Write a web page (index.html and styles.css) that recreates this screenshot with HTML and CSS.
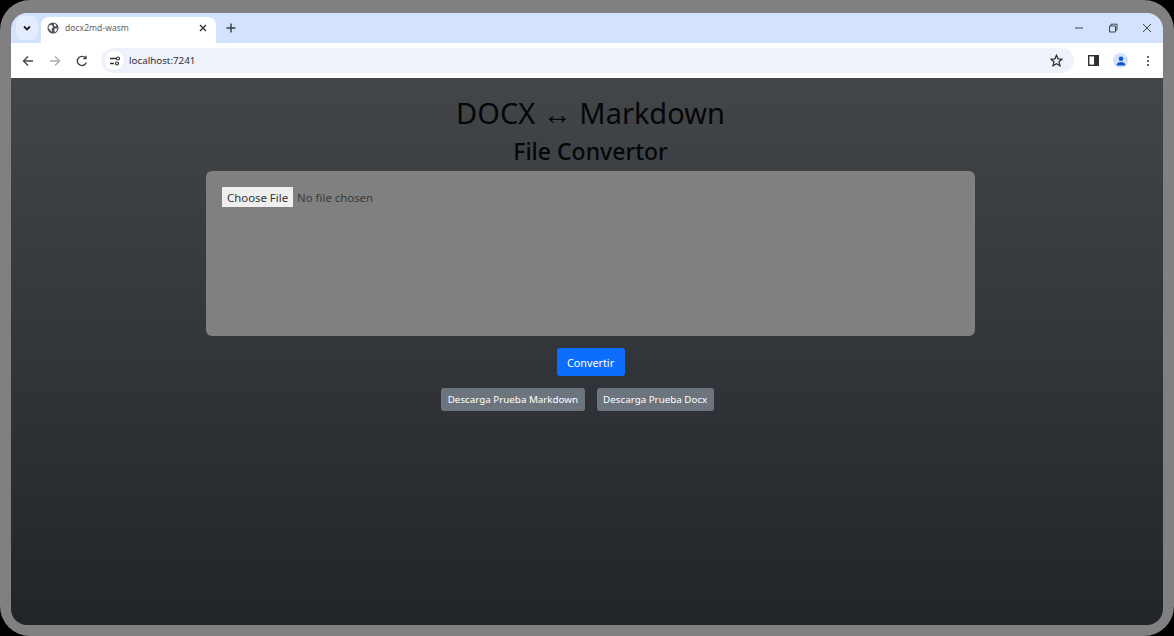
FILE: index.html
```html
<!DOCTYPE html>
<html lang="es">
<head>
    <meta charset="UTF-8">
    <meta name="viewport" content="width=device-width, initial-scale=1.0">
    <title>docx2md-wasm</title>
    <link rel="stylesheet" href="styles.css">
</head>
<body>
    <div class="frame">
        <div class="window">
            <div class="tabstrip">
                <div class="tab-search">
                    <svg width="10" height="10" viewBox="0 0 10 10"><path d="M2 3.500 5 6.500 8 3.500" fill="none" stroke="#1f1f1f" stroke-width="1.800"/></svg>
                </div>
                <div class="tab">
                    <svg width="12" height="12" viewBox="0 0 12 12"><circle cx="6" cy="6" r="5.500" fill="#50535a"/><path d="M2 3.500 5 3 6 5 4.500 7 5 10 3.500 8.500 1.500 6ZM7 1.500 9.500 3 8.500 4.500 7 4ZM7.500 6.500 10.500 6.500 9 9.500 7.500 10Z" fill="#fff"/></svg>
                    <span class="tab-title">docx2md-wasm</span>
                    <svg class="tab-close" width="8" height="8" viewBox="0 0 8 8"><path d="M1 1 7 7M7 1 1 7" stroke="#303134" stroke-width="1.400"/></svg>
                </div>
                <svg class="new-tab" width="10" height="10" viewBox="0 0 10 10"><path d="M5 .5V9.500M.5 5H9.500" stroke="#3c4043" stroke-width="1.500"/></svg>
                <div class="window-controls">
                    <svg width="10" height="10" viewBox="0 0 10 10"><path d="M1 5H9" stroke="#444" stroke-width="1"/></svg>
                    <svg width="10" height="10" viewBox="0 0 10 10"><path d="M1.500 3H7.500V9H1.500ZM3 3V1.200H9V7H7.500" fill="none" stroke="#444" stroke-width="1"/></svg>
                    <svg width="10" height="10" viewBox="0 0 10 10"><path d="M1 1 9 9M9 1 1 9" stroke="#444" stroke-width="1"/></svg>
                </div>
            </div>
            <div class="toolbar">
                <svg width="12" height="12" viewBox="0 0 12 12"><path d="M11 6H1.500M6 1.500 1.500 6 6 10.500" fill="none" stroke="#444746" stroke-width="1.400"/></svg>
                <svg width="12" height="12" viewBox="0 0 12 12"><path d="M1 6H10.500M6 1.500 10.500 6 6 10.500" fill="none" stroke="#a8abaf" stroke-width="1.400"/></svg>
                <svg width="12" height="12" viewBox="0 0 12 12"><path d="M10.300 7.500A4.600 4.600 0 1 1 9.500 3M10 .8V3.600H7.200" fill="none" stroke="#444746" stroke-width="1.400"/></svg>
                <div class="omnibox">
                    <div class="site-info">
                        <svg width="12" height="10" viewBox="0 0 12 10"><path d="M1 2.500H7M1 7.500H5" stroke="#303134" stroke-width="1.300"/><circle cx="9" cy="2.500" r="1.500" fill="none" stroke="#303134" stroke-width="1.200"/><circle cx="8" cy="7.500" r="1.500" fill="none" stroke="#303134" stroke-width="1.200"/></svg>
                    </div>
                    <span class="url">localhost:7241</span>
                    <svg class="star" width="13" height="13" viewBox="0 0 14 14"><path d="M7 1.300 8.700 5.200 12.900 5.600 9.700 8.400 10.700 12.600 7 10.400 3.300 12.600 4.300 8.400 1.100 5.600 5.300 5.200Z" fill="none" stroke="#303134" stroke-width="1.400"/></svg>
                </div>
                <div class="toolbar-right">
                    <svg width="11" height="11" viewBox="0 0 11 11"><rect x=".7" y=".7" width="9.600" height="9.600" fill="none" stroke="#303134" stroke-width="1.400"/><rect x="6" y="1" width="4" height="9" fill="#303134"/></svg>
                    <div class="avatar">
                        <svg width="10" height="10" viewBox="0 0 10 10"><circle cx="5" cy="2.700" r="2.300" fill="#0b57d0"/><path d="M.5 9.500C.8 6.800 2.800 6 5 6S9.200 6.800 9.500 9.500Z" fill="#0b57d0"/></svg>
                    </div>
                    <svg class="kebab" width="4" height="12" viewBox="0 0 4 12"><circle cx="2" cy="2" r="1.100" fill="#444746"/><circle cx="2" cy="6" r="1.100" fill="#444746"/><circle cx="2" cy="10" r="1.100" fill="#444746"/></svg>
                </div>
            </div>
            <main class="page">
                <h1>DOCX ↔ Markdown</h1>
                <h2>File Convertor</h2>
                <div class="drop-panel">
                    <span class="file-button">Choose File</span>
                    <span class="file-name">No file chosen</span>
                </div>
                <button class="btn btn-primary">Convertir</button>
                <div class="downloads">
                    <button class="btn btn-secondary">Descarga Prueba Markdown</button>
                    <button class="btn btn-secondary">Descarga Prueba Docx</button>
                </div>
            </main>
        </div>
    </div>
</body>
</html>
```

FILE: styles.css
```css
* {
    box-sizing: border-box;
}

html, body {
    height: 100%;
}

body {
    margin: 0;
    background-color: #000;
    font-family: "Noto Sans", "Open Sans", sans-serif;
    overflow: hidden;
}

.frame {
    height: 100%;
    padding: 13px 11px 11px 11px;
    background-color: #808080;
    border-radius: 30px;
}

.window {
    height: 100%;
    display: flex;
    flex-direction: column;
    border-radius: 16px;
    overflow: hidden;
}

.tabstrip {
    height: 30px;
    flex: none;
    display: flex;
    align-items: flex-end;
    padding-left: 5px;
    background-color: #d3e3fd;
}

.tab-search {
    width: 22px;
    height: 24px;
    margin-bottom: 3px;
    margin-right: 3px;
    display: flex;
    align-items: center;
    justify-content: center;
    background-color: #e4edfd;
    border-radius: 8px;
}

.tab {
    width: 175px;
    height: 26px;
    display: flex;
    align-items: center;
    gap: 6px;
    padding: 0 9px 4px 6px;
    background-color: #fff;
    border-radius: 8px 8px 0 0;
}

.tab-title {
    font-size: 8.600px;
    color: #5f6368;
}

.tab-close {
    margin-left: auto;
}

.new-tab {
    margin: 0 0 10px 10px;
}

.window-controls {
    margin-left: auto;
    align-self: center;
    display: flex;
    gap: 24px;
    padding-right: 11px;
}

.toolbar {
    height: 35px;
    flex: none;
    display: flex;
    align-items: center;
    gap: 15px;
    padding: 0 11px;
    background-color: #fff;
}

.omnibox {
    flex: 1;
    height: 25px;
    margin-left: -2px;
    display: flex;
    align-items: center;
    padding: 0 11px 0 4px;
    background-color: #eef2fa;
    border-radius: 13px;
}

.site-info {
    width: 19px;
    height: 19px;
    margin-right: 5px;
    display: flex;
    align-items: center;
    justify-content: center;
    background-color: #fff;
    border-radius: 50%;
}

.url {
    font-size: 9.800px;
    color: #303134;
}

.star {
    margin-left: auto;
}

.toolbar-right {
    display: flex;
    align-items: center;
    gap: 15px;
    margin-left: -1px;
    padding-right: 2px;
}

.kebab {
    margin-left: 3px;
}

.avatar {
    width: 15px;
    height: 15px;
    margin-left: -1px;
    display: flex;
    align-items: center;
    justify-content: center;
    background-color: #d3e3fd;
    border-radius: 50%;
}

.page {
    flex: 1;
    display: flex;
    flex-direction: column;
    align-items: center;
    padding: 15px 0 0 7px;
    background: linear-gradient(#434649, #212529);
    color: #050607;
}

h1 {
    margin: 0;
    font-size: 29px;
    font-weight: 400;
    line-height: 40px;
}

h2 {
    margin: 0 0 2px 0;
    font-size: 23px;
    font-weight: 500;
    line-height: 36px;
}

.drop-panel {
    width: 769px;
    height: 165px;
    flex: none;
    display: flex;
    align-items: flex-start;
    padding: 16px;
    background-color: #808080;
    border-radius: 6px;
    font-size: 11.400px;
}

.file-button {
    height: 20px;
    padding: 0 5px;
    display: flex;
    align-items: center;
    background-color: #efefef;
    color: #333;
}

.file-name {
    height: 20px;
    margin-left: 4px;
    display: flex;
    align-items: center;
    color: #3a3a3a;
}

.btn {
    border: none;
    font-family: inherit;
    color: #fff;
    border-radius: 3px;
}

.btn-primary {
    width: 68px;
    height: 28px;
    margin-top: 12px;
    padding: 0;
    background-color: #0d6efd;
    font-size: 10.800px;
}

.downloads {
    display: flex;
    gap: 12px;
    margin-top: 12px;
    margin-right: 26px;
}

.btn-secondary {
    height: 23px;
    padding: 0 6.500px;
    background-color: #6c757d;
    font-size: 9.800px;
}
```
